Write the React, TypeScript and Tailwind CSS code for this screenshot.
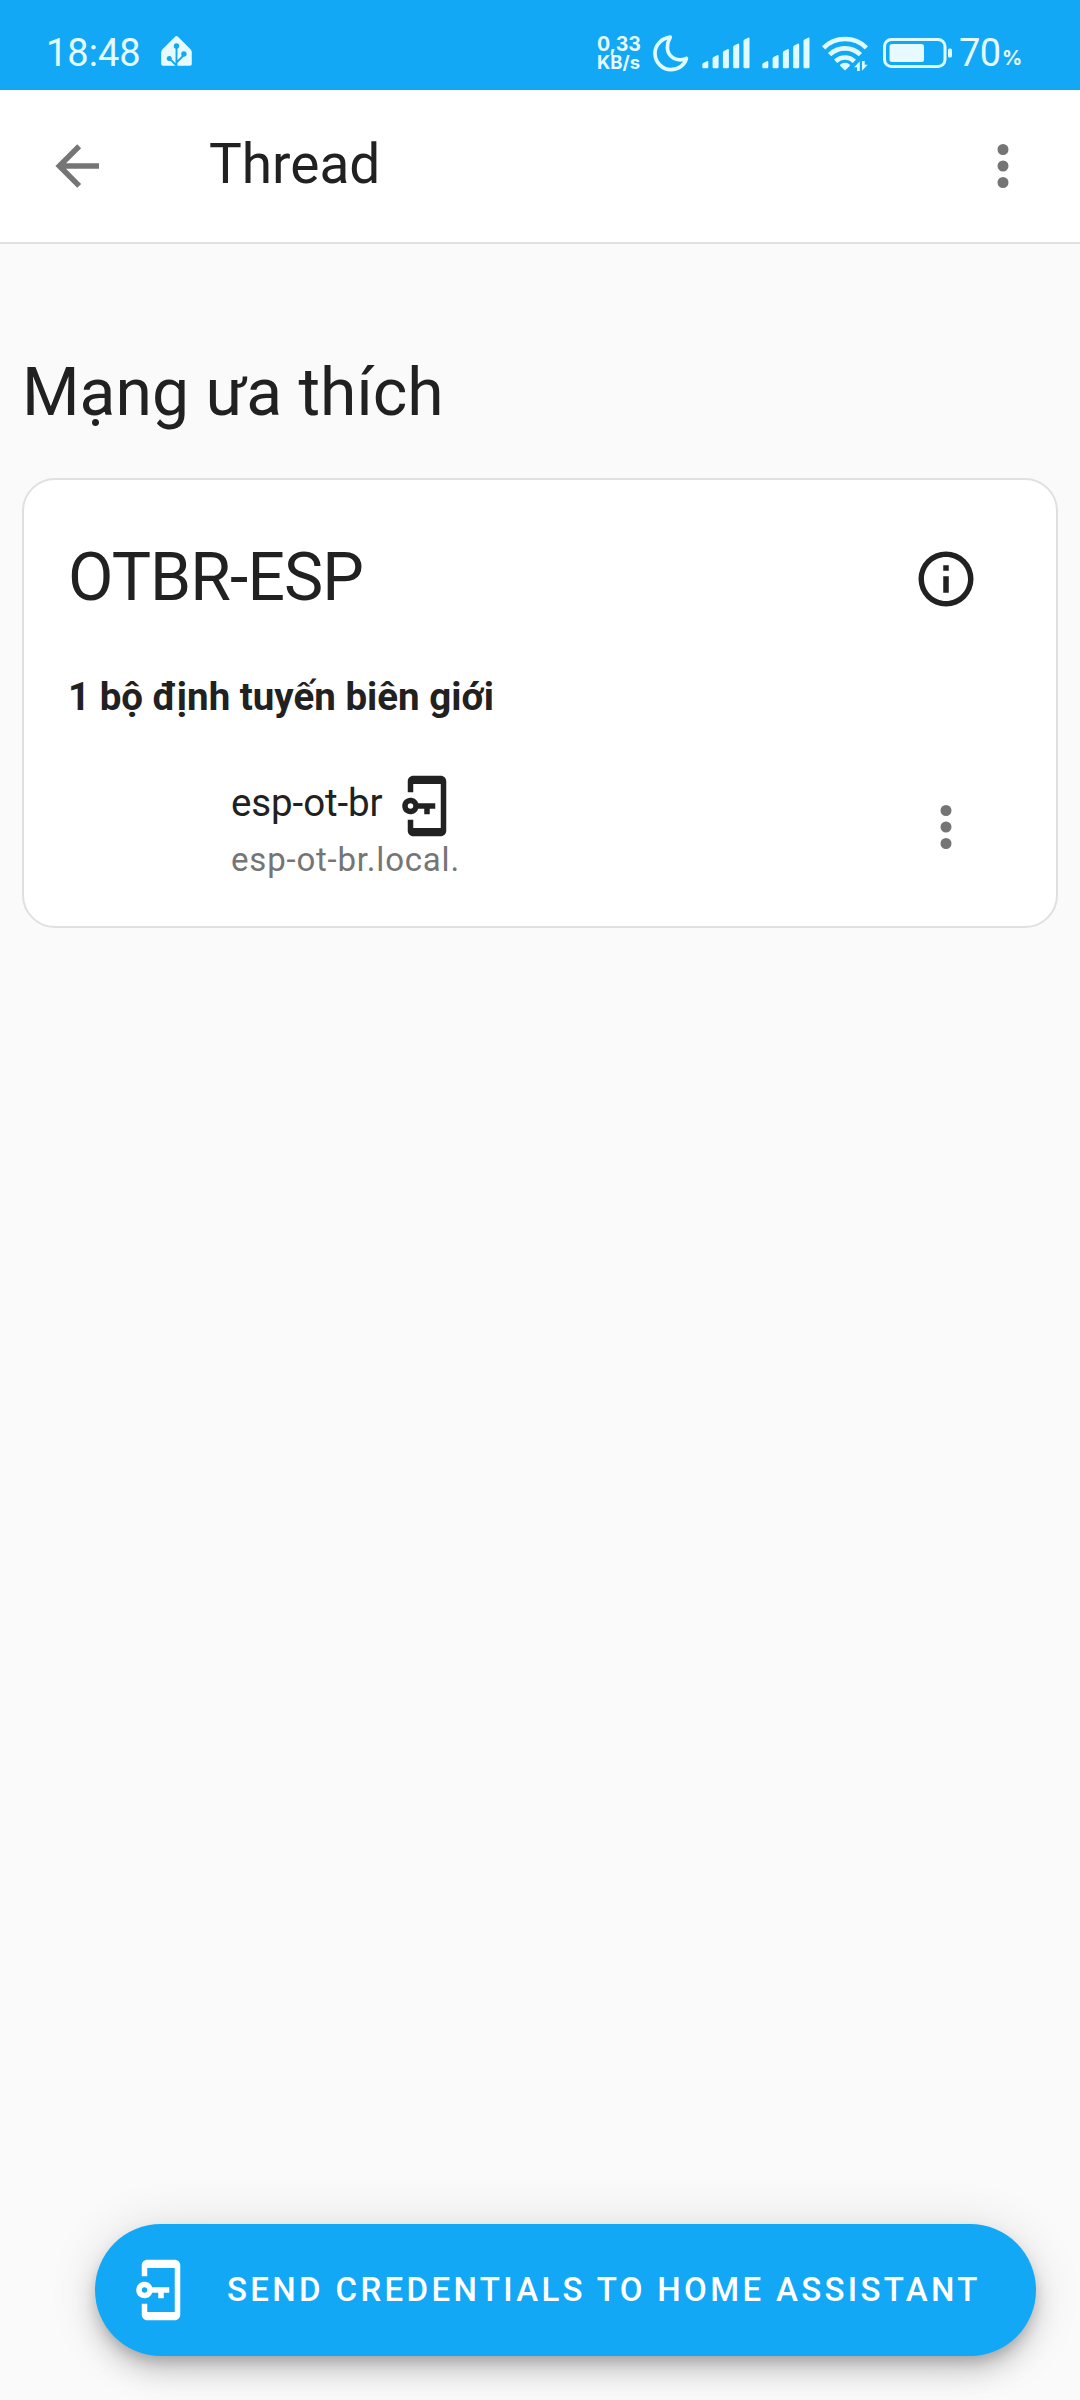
import type { ReactNode } from 'react';

type IconProps = { className?: string };

function MdiIcon({ path, className = '' }: { path: string; className?: string }) {
  return (
    <svg viewBox="0 0 24 24" className={`size-[66px] shrink-0 fill-current ${className}`} aria-hidden="true">
      <path d={path} />
    </svg>
  );
}

const paths = {
  arrowLeft: 'M20,11V13H8L13.5,18.5L12.08,19.92L4.16,12L12.08,4.08L13.5,5.5L8,11H20Z',
  dots: 'M12,16A2,2 0 0,1 14,18A2,2 0 0,1 12,20A2,2 0 0,1 10,18A2,2 0 0,1 12,16M12,10A2,2 0 0,1 14,12A2,2 0 0,1 12,14A2,2 0 0,1 10,12A2,2 0 0,1 12,10M12,4A2,2 0 0,1 14,6A2,2 0 0,1 12,8A2,2 0 0,1 10,6A2,2 0 0,1 12,4Z',
  info: 'M11,9H13V7H11M12,20C7.59,20 4,16.41 4,12C4,7.59 7.59,4 12,4C16.41,4 20,7.59 20,12C20,16.41 16.41,20 12,20M12,2A10,10 0 0,0 2,12A10,10 0 0,0 12,22A10,10 0 0,0 22,12A10,10 0 0,0 12,2M11,17H13V11H11V17Z',
  cellphoneKey:
    'M7 1C5.9 1 5 1.9 5 3V7H7V4H17V20H7V17H5V21C5 22.1 5.9 23 7 23H17C18.1 23 19 22.1 19 21V3C19 1.9 18.1 1 17 1H7M6 9C4.3 9 3 10.3 3 12S4.3 15 6 15C7.3 15 8.4 14.2 8.8 13H11V15H13V13H15V11H8.8C8.4 9.8 7.3 9 6 9M6 11C6.6 11 7 11.4 7 12S6.6 13 6 13 5 12.6 5 12 5.4 11 6 11Z',
};

function HomeAssistantIcon({ className = '' }: IconProps) {
  return (
    <svg viewBox="0 0 31 30" className={`h-[30px] w-[31px] ${className}`} aria-hidden="true">
      <path d="M14 .8a2.1 2.1 0 0 1 3 0L29.5 13.200q1.300 1.400 1.300 3.200V28q0 1.800-1.800 1.800H2Q.2 29.800.2 28V16.400q0-1.800 1.300-3.200Z" fill="#e6faff" />
      <g stroke="#12a8f6" strokeWidth="1.900" fill="none">
        <path d="M15.500 30V10M15.500 29.500 8.500 22.700M15.500 26.500l7.300-7.300" />
      </g>
      <g fill="#12a8f6">
        <circle cx="15.500" cy="10" r="2.700" />
        <circle cx="8.300" cy="22.600" r="2.500" />
        <circle cx="22.900" cy="18" r="2.700" />
      </g>
    </svg>
  );
}

function MoonIcon({ className = '' }: IconProps) {
  return (
    <svg viewBox="0 0 36 37" className={`h-[37px] w-[36px] ${className}`} aria-hidden="true">
      <path
        d="M17.200 2.200C8.800 3.300 2 9.800 2 18.200 2 27.400 9.200 34.600 18 34.600c7.500 0 13.600-4.600 15.400-11.200-2.800 1.200-4.200 1.400-6.400 1.400-7 0-12.600-5.400-12.600-12.400 0-3.900.8-6.800 2.800-10.200Z"
        fill="none"
        stroke="#e0fbff"
        strokeWidth="3.700"
        strokeLinejoin="round"
      />
    </svg>
  );
}

function SignalIcon({ className = '' }: IconProps) {
  const tops = [24, 18, 12, 6.500, 0.500];
  return (
    <svg viewBox="0 0 48 32" className={`h-[32px] w-[48px] ${className}`} fill="#e0fbff" aria-hidden="true">
      {tops.map((top, i) => {
        const x = i * 10.300 + 0.300;
        return (
          <path
            key={top}
            d={`M${x} ${top + 3.500}q0-1 1-1.500l3.600-1.800q1.400-.5 1.400 1V30q0 1.300-1.300 1.300H${x + 1.300}q-1.300 0-1.300-1.300Z`}
          />
        );
      })}
    </svg>
  );
}

function WifiIcon({ className = '' }: IconProps) {
  return (
    <svg viewBox="0 0 46 35" className={`h-[35px] w-[46px] ${className}`} aria-hidden="true">
      <g fill="none" stroke="#e0fbff" strokeWidth="4.600">
        <path d="M1.600 11.800a30.500 30.500 0 0 1 42.800 0" />
        <path d="M7.600 18.700a22 22 0 0 1 30.800 0" />
        <path d="M13.600 25.200a13.800 13.800 0 0 1 18.800 0" />
      </g>
      <path d="M23 34.500 18.300 30q-.8-1 .3-1.800 4.400-2.800 8.800 0 1.100.8.3 1.800Z" fill="#e0fbff" />
      <path d="M37.800 25.300V35h-2.800v-3.800h-2.900ZM40 34.800V25h2.700v3.700h3Z" fill="#e0fbff" />
    </svg>
  );
}

function BatteryIcon({ className = '' }: IconProps) {
  return (
    <svg viewBox="0 0 70 30" className={`h-[30px] w-[70px] ${className}`} aria-hidden="true">
      <rect x="1.500" y="1.500" width="60.500" height="27" rx="7" fill="none" stroke="#e0fbff" strokeWidth="3" />
      <rect x="6.500" y="6" width="34.500" height="18" rx="2.500" fill="#e6faff" />
      <rect x="65" y="10.500" width="4" height="9" rx="1.500" fill="#e0fbff" />
    </svg>
  );
}

function StatusBar() {
  return (
    <div className="flex h-[90px] shrink-0 items-center bg-[#12a8f6] pt-[16px] pr-[58px] pl-[46px] text-[#e6fbff]">
      <span className="text-[38px] leading-[74px]">18:48</span>
      <HomeAssistantIcon className="ml-[20px] mt-[-4px]" />
      <div className="ml-auto flex h-[74px] items-center">
        <div className="flex w-[46px] flex-col font-['Inter'] font-bold">
          <span className="text-[19.500px] leading-[18px]">0,33</span>
          <span className="text-[18.500px] leading-[18px]">KB/s</span>
        </div>
        <MoonIcon className="ml-[10px]" />
        <SignalIcon className="ml-[13px]" />
        <SignalIcon className="ml-[12px]" />
        <WifiIcon className="ml-[12px]" />
        <BatteryIcon className="ml-[15px]" />
        <span className="ml-[6px] w-[43px] text-[38px] leading-[74px] tracking-[-0.500px]">70</span>
        <span className="mt-[9px] w-[20px] font-['Inter'] text-[20px] leading-[26px] font-bold">%</span>
      </div>
    </div>
  );
}

function AppBar({ title }: { title: string }) {
  return (
    <header className="flex h-[154px] shrink-0 items-center border-b-2 border-[#e0e0e0] bg-white pr-[44px] pl-[44px]">
      <button className="text-[#757575]" aria-label="Back">
        <MdiIcon path={paths.arrowLeft} />
      </button>
      <h1 className="ml-[99px] pb-[5px] text-[55px] leading-[64px] text-[#212121]">{title}</h1>
      <button className="ml-auto text-[#757575]" aria-label="Menu">
        <MdiIcon path={paths.dots} />
      </button>
    </header>
  );
}

function Card({ children }: { children: ReactNode }) {
  return (
    <section className="mx-[22px] flex h-[450px] flex-col rounded-[33px] border-2 border-[#e0e0e0] bg-white pt-[64px] pr-[77px] pl-[44px]">
      {children}
    </section>
  );
}

export default function App() {
  return (
    <div className="relative flex h-[2400px] w-[1080px] flex-col overflow-hidden bg-[#fafafa] font-['Roboto',sans-serif] text-[#212121]">
      <StatusBar />
      <AppBar title="Thread" />
      <main className="flex flex-col pt-[109px]">
        <h2 className="mb-[45px] ml-[22px] text-[66px] leading-[80px]">Mạng ưa thích</h2>
        <Card>
          <div className="flex h-[68px] items-center justify-between">
            <span className="text-[66px] leading-[68px] tracking-[-0.900px]">OTBR-ESP</span>
            <MdiIcon path={paths.info} className="mt-[2px]" />
          </div>
          <h4 className="mt-[61px] text-[38.500px] leading-[48px] font-bold">1 bộ định tuyến biên giới</h4>
          <div className="mt-[54px] flex h-[114px] items-center pl-[163px]">
            <div className="flex flex-col">
              <div className="flex h-[56px] items-center">
                <span className="text-[38.500px] leading-[56px] tracking-[-0.100px]">esp-ot-br</span>
                <MdiIcon path={paths.cellphoneKey} className="mt-[6px] ml-[11px]" />
              </div>
              <span className="text-[33px] leading-[58px] tracking-[0.800px] text-[#757575]">esp-ot-br.local.</span>
            </div>
            <button className="mb-[10px] ml-auto text-[#757575]" aria-label="Router menu">
              <MdiIcon path={paths.dots} />
            </button>
          </div>
        </Card>
      </main>
      <button className="absolute right-[44px] bottom-[44px] flex h-[132px] w-[941px] items-center rounded-full bg-[#12a8f6] pl-[33px] text-white shadow-[0_8px_14px_-3px_rgba(0,0,0,0.2),0_16px_27px_0_rgba(0,0,0,0.14),0_3px_50px_0_rgba(0,0,0,0.12)]">
        <MdiIcon path={paths.cellphoneKey} />
        <span className="ml-[33px] text-[33px] leading-[40px] font-medium tracking-[3.350px] whitespace-nowrap">
          SEND CREDENTIALS TO HOME ASSISTANT
        </span>
      </button>
    </div>
  );
}
